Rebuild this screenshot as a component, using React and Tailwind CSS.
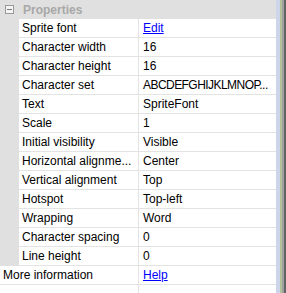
const rows = [
  { label: 'Sprite font', value: 'Edit', link: true },
  { label: 'Character width', value: '16' },
  { label: 'Character height', value: '16' },
  { label: 'Character set', value: 'ABCDEFGHIJKLMNOP...', tight: true },
  { label: 'Text', value: 'SpriteFont' },
  { label: 'Scale', value: '1' },
  { label: 'Initial visibility', value: 'Visible' },
  { label: 'Horizontal alignme...', value: 'Center' },
  { label: 'Vertical alignment', value: 'Top' },
  { label: 'Hotspot', value: 'Top-left' },
  { label: 'Wrapping', value: 'Word' },
  { label: 'Character spacing', value: '0' },
  { label: 'Line height', value: '0' },
];

function Value({ row }) {
  if (row.link) {
    return <span className="text-[#0000ff] underline">{row.value}</span>;
  }
  if (row.tight) {
    return <span className="tracking-[-0.55px]">{row.value}</span>;
  }
  return <span>{row.value}</span>;
}

export default function App() {
  return (
    <div
      className="flex h-[293px] w-[286px] overflow-hidden bg-white text-[12px] leading-[18px] text-black"
      style={{ fontFamily: '"Liberation Sans", Arial, sans-serif' }}
    >
      {/* Property grid */}
      <div className="flex w-[276px] flex-col">
        {/* Category header */}
        <div className="flex h-[19px] shrink-0 items-center bg-[#e0e0e0]">
          <div className="ml-[5px] flex h-[9px] w-[9px] items-center justify-center border border-[#9a9a9a] bg-[#f4f4f4]">
            <div className="h-px w-[5px] bg-[#7a7a7a]"></div>
          </div>
          <span className="ml-[9px] font-bold text-[#a8a8a8]">Properties</span>
        </div>

        {rows.map((row) => (
          <div key={row.label} className="flex h-[19px] shrink-0">
            <div className="w-[19px] shrink-0 bg-[#e0e0e0]"></div>
            <div className="w-[120px] shrink-0 whitespace-nowrap border-b border-r border-[#e3e3e3] pl-[3px]">
              {row.label}
            </div>
            <div className="flex-1 overflow-hidden whitespace-nowrap border-b border-[#e3e3e3] pl-[4px]">
              <Value row={row} />
            </div>
          </div>
        ))}

        {/* Ungrouped row */}
        <div className="flex h-[19px] shrink-0">
          <div className="w-[139px] shrink-0 whitespace-nowrap border-b border-r border-[#e3e3e3] pl-[3px]">
            More information
          </div>
          <div className="flex-1 whitespace-nowrap border-b border-[#e3e3e3] pl-[4px]">
            <span className="text-[#0000ff] underline">Help</span>
          </div>
        </div>

        {/* Empty row */}
        <div className="flex flex-1">
          <div className="w-[139px] shrink-0 border-r border-[#e3e3e3]"></div>
          <div className="flex-1"></div>
        </div>
      </div>

      {/* Window frame */}
      <div className="w-[4px] bg-[#ccd5ea]"></div>
      <div className="w-[2px] bg-[#b4c29a]"></div>
      <div className="w-[2px] bg-[#a0a0a0]"></div>
      <div className="w-[2px] bg-[#646464]"></div>
    </div>
  );
}
